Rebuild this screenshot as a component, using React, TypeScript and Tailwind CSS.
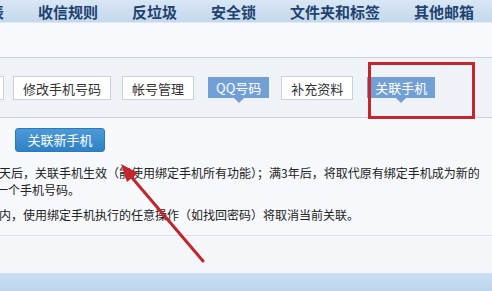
import React from "react";

const navItems = ["表", "收信规则", "反垃圾", "安全锁", "文件夹和标签", "其他邮箱"];

const Tab = ({ label, active }: { label: string; active?: boolean }) => {
  if (active) {
    return (
      <div className="relative h-[21px] px-[8px] flex items-center bg-[#72a0d6] text-white text-[13px] leading-none">
        {label}
        <span className="absolute left-1/2 -translate-x-1/2 top-full w-0 h-0 border-l-[5px] border-r-[5px] border-t-[5px] border-l-transparent border-r-transparent border-t-[#72a0d6]" />
      </div>
    );
  }
  return (
    <div className="h-[24px] px-[9px] flex items-center bg-white border border-[#c9d1dc] text-[#333] text-[13px] leading-none">
      {label}
    </div>
  );
};

export default function App() {
  return (
    <div
      className="relative w-[492px] h-[291px] overflow-hidden bg-[#f6f8fb]"
      style={{ fontFamily: '"Noto Sans CJK SC", "Noto Sans", sans-serif' }}
    >
      {/* top nav */}
      <div className="h-[22px] bg-gradient-to-b from-[#d9e7f5] to-[#c4d8ed] flex items-center gap-[34px] text-[15px] font-bold text-[#21426f] leading-none">
        {navItems.map((n, i) => (
          <span key={n} className={i === 0 ? "-ml-[11px]" : ""}>
            {n}
          </span>
        ))}
      </div>
      <div className="h-[35px] bg-[#f7f9fc] border-t border-[#e3e9f1]" />

      {/* tab row */}
      <div className="h-[61px] bg-[#eff3f8] border-t border-b border-[#c9d2dd] flex items-start pt-[18px] gap-[11px]">
        <div className="-ml-[30px] w-[34px] h-[24px] bg-white border border-[#c9d1dc]" />
        <div className="ml-[-2px] flex items-start gap-[11px]">
          <Tab label="修改手机号码" />
          <Tab label="帐号管理" />
          <div className="ml-[3px] mt-[1px]">
            <Tab label="QQ号码" active />
          </div>
          <div className="ml-[1px]">
            <Tab label="补充资料" />
          </div>
          <div className="ml-[3px] mt-[1px]">
            <Tab label="关联手机" active />
          </div>
        </div>
      </div>

      {/* content */}
      <div className="pt-[8px] pl-[15px]">
        <button className="w-[90px] h-[24px] rounded-[3px] border border-[#2f79b8] bg-gradient-to-b from-[#4b9ad8] to-[#2f82c6] text-white text-[13px] leading-none">
          关联新手机
        </button>
      </div>
      <div className="mt-[13px] text-[12px] leading-[16px] text-[#222] whitespace-nowrap">
        <p className="-ml-[1px]">天后，关联手机生效（能使用绑定手机所有功能）；满3年后，将取代原有绑定手机成为新的</p>
        <p className="-ml-[4px] mt-[1px]">一个手机号码。</p>
        <p className="mt-[9px] -ml-[1px]">内，使用绑定手机执行的任意操作（如找回密码）将取消当前关联。</p>
      </div>
      <div className="mt-[12px] h-[38px] border-t border-[#dde3ea] bg-[#f4f6f9]" />
      <div className="h-[20px] bg-gradient-to-b from-[#c9def3] to-[#bcd4ee]" />

      {/* annotation box */}
      <div className="absolute left-[368px] top-[62px] w-[107px] h-[57px] border-[3px] border-[#c4262c]" />

      {/* annotation arrow */}
      <svg className="absolute left-0 top-0" width="492" height="291" viewBox="0 0 492 291">
        <line x1="203" y1="261" x2="128" y2="173" stroke="#c4262c" strokeWidth="3" strokeLinecap="round" />
        <polygon points="121,164 138,173 127,182" fill="#c4262c" />
      </svg>
    </div>
  );
}
